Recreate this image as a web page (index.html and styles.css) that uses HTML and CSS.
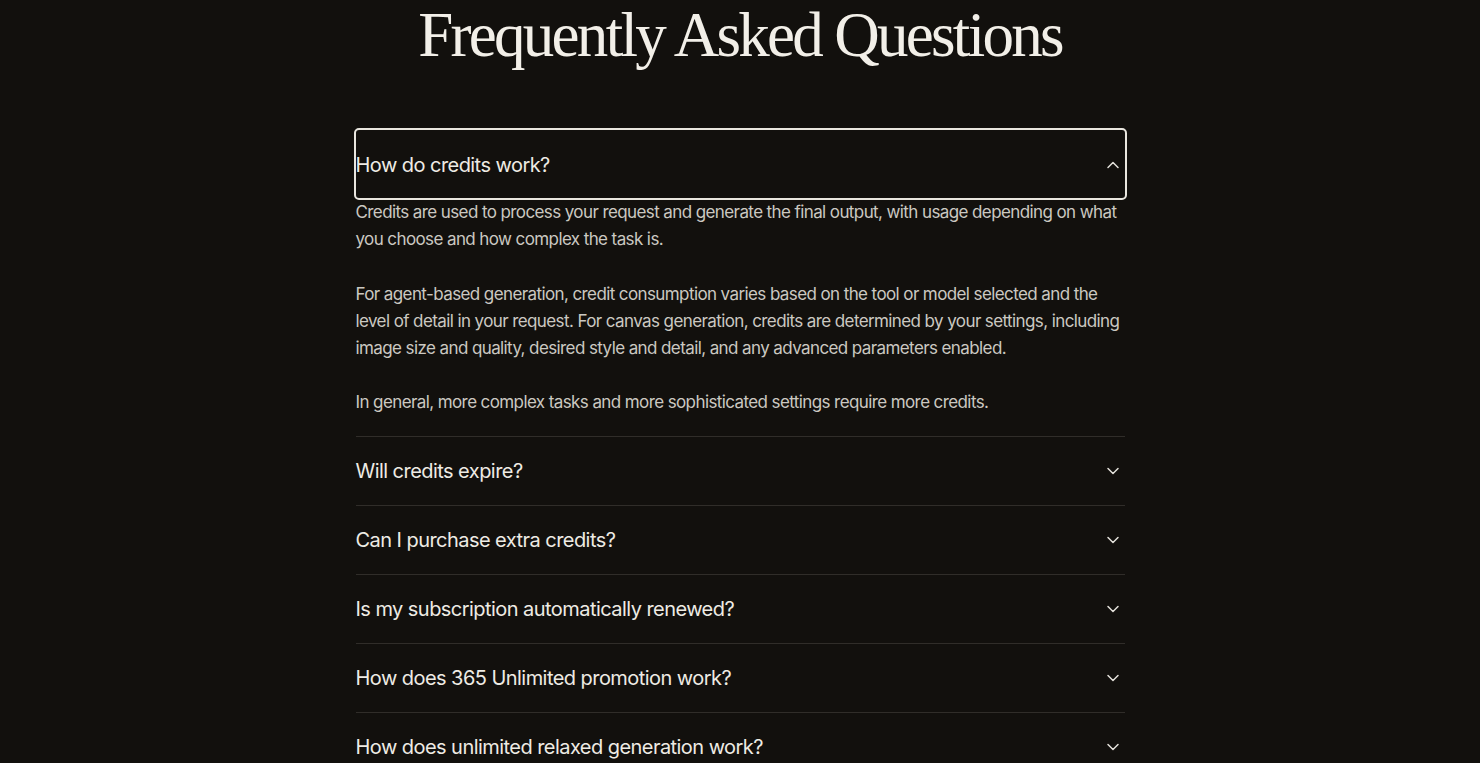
FILE: index.html
```html
<!DOCTYPE html>
<html lang="en">
<head>
    <meta charset="UTF-8">
    <meta name="viewport" content="width=device-width, initial-scale=1.0">
    <title>FAQ</title>
    <link rel="stylesheet" href="styles.css">
</head>
<body>
    <section class="faq">
        <h1>Frequently Asked Questions</h1>
        <div class="faq-list">
            <div class="faq-item open">
                <button class="faq-q focused">
                    <span>How do credits work?</span>
                    <svg class="chev" width="16" height="16" viewBox="0 0 16 16"><path d="M3 10.5 8 5.5 13 10.5" /></svg>
                </button>
                <div class="faq-a">
                    <p>Credits are used to process your request and generate the final output, with usage depending on what you choose and how complex the task is.</p>
                    <p>For agent-based generation, credit consumption varies based on the tool or model selected and the level of detail in your request. For canvas generation, credits are determined by your settings, including image size and quality, desired style and detail, and any advanced parameters enabled.</p>
                    <p>In general, more complex tasks and more sophisticated settings require more credits.</p>
                </div>
            </div>
            <div class="faq-item">
                <button class="faq-q">
                    <span>Will credits expire?</span>
                    <svg class="chev" width="16" height="16" viewBox="0 0 16 16"><path d="M3 5.5 8 10.5 13 5.5" /></svg>
                </button>
            </div>
            <div class="faq-item">
                <button class="faq-q">
                    <span>Can I purchase extra credits?</span>
                    <svg class="chev" width="16" height="16" viewBox="0 0 16 16"><path d="M3 5.5 8 10.5 13 5.5" /></svg>
                </button>
            </div>
            <div class="faq-item">
                <button class="faq-q">
                    <span>Is my subscription automatically renewed?</span>
                    <svg class="chev" width="16" height="16" viewBox="0 0 16 16"><path d="M3 5.5 8 10.5 13 5.5" /></svg>
                </button>
            </div>
            <div class="faq-item">
                <button class="faq-q">
                    <span>How does 365 Unlimited promotion work?</span>
                    <svg class="chev" width="16" height="16" viewBox="0 0 16 16"><path d="M3 5.5 8 10.5 13 5.5" /></svg>
                </button>
            </div>
            <div class="faq-item">
                <button class="faq-q">
                    <span>How does unlimited relaxed generation work?</span>
                    <svg class="chev" width="16" height="16" viewBox="0 0 16 16"><path d="M3 5.5 8 10.5 13 5.5" /></svg>
                </button>
            </div>
        </div>
    </section>
</body>
</html>
```

FILE: styles.css
```css
body {
    margin: 0;
    background: #12100d;
    color: #eeebe4;
    font-family: Inter, "Noto Sans", sans-serif;
}
.faq {
    width: 769px;
    margin: 0 auto;
}
h1 {
    margin: 0;
    height: 130px;
    text-align: center;
    font-family: "Liberation Serif", "DejaVu Serif", serif;
    font-weight: 400;
    font-size: 63px;
    line-height: 70px;
    letter-spacing: -2.7px;
    color: #f2efe8;
}
.faq-item {
    border-bottom: 1px solid #302d29;
}
.faq-q {
    display: flex;
    align-items: center;
    justify-content: space-between;
    width: 100%;
    height: 68px;
    padding: 1px 4px 0 0;
    border: none;
    background: none;
    color: #eeebe4;
    font-family: Inter, "Noto Sans", sans-serif;
    font-size: 20px;
    letter-spacing: -0.55px;
    text-align: left;
    cursor: pointer;
}
.faq-q.focused {
    outline: 2px solid #e9e6df;
    outline-offset: 0;
    border-radius: 3px;
}
.chev {
    fill: none;
    stroke: #e4e1da;
    stroke-width: 1.5;
    stroke-linecap: round;
    stroke-linejoin: round;
}
.faq-a {
    padding: 1px 0 19px;
    color: #cbc8c1;
    font-size: 17px;
    line-height: 1.6;
    letter-spacing: -0.6px;
}
.faq-a p {
    margin: 0 0 1.6em;
}
.faq-a p:last-child {
    margin-bottom: 0;
}
```
